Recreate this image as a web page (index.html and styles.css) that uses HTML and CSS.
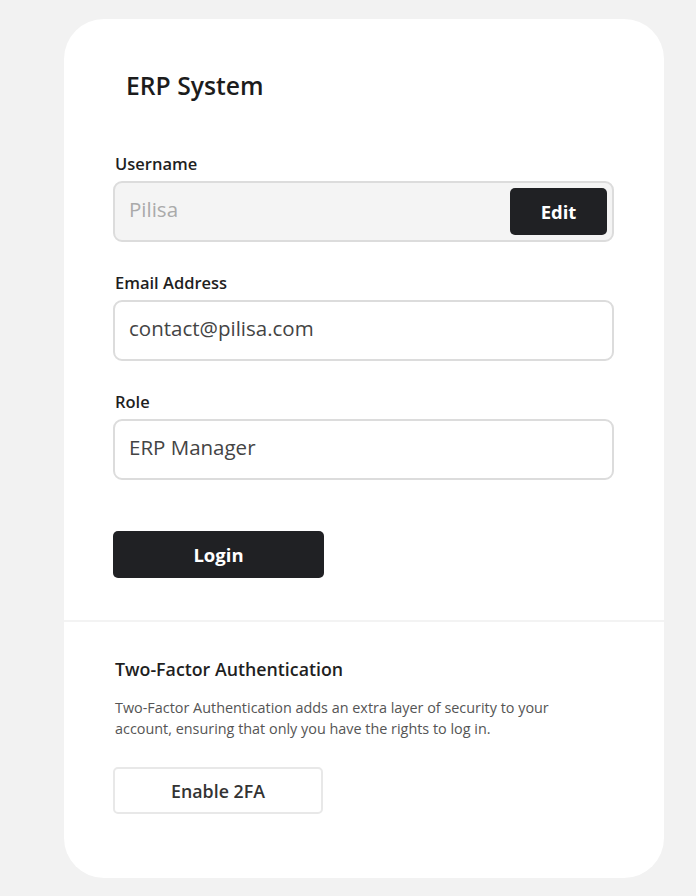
FILE: index.html
```html
<!DOCTYPE html>
<html lang="en">
<head>
<meta charset="utf-8">
<title>ERP System</title>
<link rel="stylesheet" href="styles.css">
</head>
<body>
<div class="card">
  <section class="main">
    <h1 class="title">ERP System</h1>
    <div class="field">
      <label class="label">Username</label>
      <div class="input input-disabled">
        <span class="value placeholder">Pilisa</span>
        <button class="btn-edit" type="button">Edit</button>
      </div>
    </div>
    <div class="field">
      <label class="label">Email Address</label>
      <div class="input"><span class="value">contact@pilisa.com</span></div>
    </div>
    <div class="field">
      <label class="label">Role</label>
      <div class="input"><span class="value">ERP Manager</span></div>
    </div>
    <button class="btn-login" type="button">Login</button>
  </section>
  <section class="twofa">
    <h2 class="twofa-title">Two-Factor Authentication</h2>
    <p class="twofa-text">Two-Factor Authentication adds an extra layer of security to your account, ensuring that only you have the rights to log in.</p>
    <button class="btn-outline" type="button">Enable 2FA</button>
  </section>
</div>
</body>
</html>
```

FILE: styles.css
```css
* { box-sizing: border-box; }
html, body { margin: 0; padding: 0; }
body {
  background: #f2f2f2;
  font-family: "Open Sans", "Noto Sans", "Liberation Sans", sans-serif;
  color: #1f1f1f;
  padding: 19px 0 18px 64px;
}
.card {
  width: 600px;
  height: 859px;
  background: #ffffff;
  border-radius: 40px;
  display: flex;
  flex-direction: column;
}
.main {
  display: flex;
  flex-direction: column;
  padding: 52px 50px 42px 49px;
  border-bottom: 2px solid #f3f3f3;
}
.title {
  margin: 0 0 52px 13px;
  font-size: 24.7px;
  font-weight: 600;
  line-height: 30px;
  color: #1c1c1c;
}
.field { margin-bottom: 30px; }
.label {
  display: block;
  margin: 0 0 6px 2px;
  font-size: 16.5px;
  font-weight: 600;
  line-height: 22px;
  color: #1f1f1f;
}
.input {
  height: 61px;
  border: 2px solid #dcdcdc;
  border-radius: 9px;
  display: flex;
  align-items: center;
  justify-content: space-between;
  padding: 0 5px 0 14px;
  background: #fff;
}
.input-disabled { background: #f4f4f4; }
.value {
  margin-bottom: 5px;
  font-size: 20.5px;
  color: #444;
}
.placeholder { color: #aaa; }
.btn-edit {
  width: 97px;
  height: 47px;
  border: none;
  border-radius: 5px;
  background: #202124;
  color: #fff;
  font-family: inherit;
  font-size: 18.5px;
  font-weight: 700;
}
.btn-login {
  margin-top: 21px;
  width: 211px;
  height: 47px;
  border: none;
  border-radius: 5px;
  background: #202124;
  color: #fff;
  font-family: inherit;
  font-size: 18.5px;
  font-weight: 700;
}
.twofa {
  padding: 34px 50px 0 49px;
}
.twofa-title {
  margin: 0 0 15px 2px;
  font-size: 17.8px;
  font-weight: 600;
  line-height: 26px;
  color: #1f1f1f;
}
.twofa-text {
  margin: 0 0 28px 2px;
  width: 450px;
  font-size: 14.4px;
  line-height: 21px;
  color: #555;
}
.btn-outline {
  width: 210px;
  height: 47px;
  border: 2px solid #e8e8e8;
  border-radius: 5px;
  background: #fff;
  color: #333;
  font-family: inherit;
  font-size: 17.8px;
  font-weight: 600;
  display: block;
}
```
